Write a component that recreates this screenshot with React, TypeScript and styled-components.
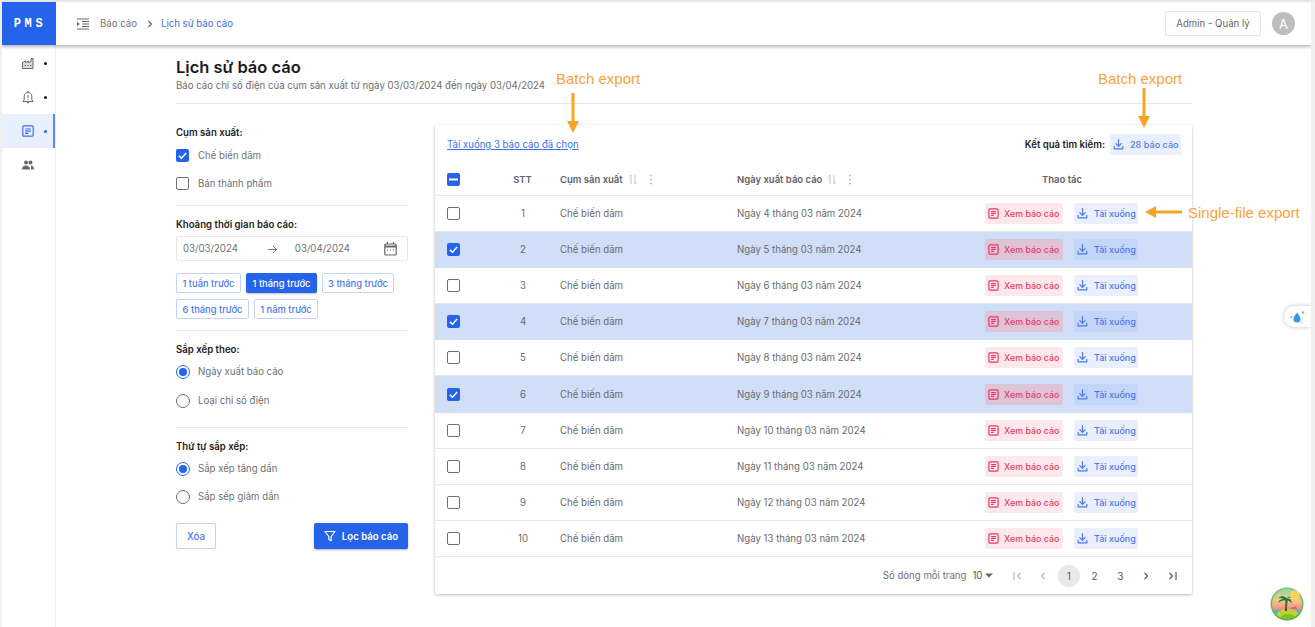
import React from "react";
import styled, { createGlobalStyle } from "styled-components";

const Global = createGlobalStyle`
  html, body { margin: 0; padding: 0; background: #fff; }
  body { font-family: Inter, "Noto Sans", sans-serif; color: #6b6b70; overflow: hidden; }
  * { box-sizing: border-box; }
`;

const Page = styled.div`
  width: 1315px; height: 627px; position: relative; overflow: hidden; background: #fff;
  border-top: 2px solid #e6e6e6; border-right: 4px solid #f0f0f0; border-left: 2px solid #f0f0f0;
`;
const TopBar = styled.header`
  height: 43px; display: flex; align-items: stretch; background: #fff;
  box-shadow: 0 2px 3px rgba(0,0,0,.28); position: relative; z-index: 2;
`;
const Logo = styled.div`
  width: 54px; background: #2563eb; color: #fff; display: flex; align-items: center; justify-content: center;
  font: 700 12px "Liberation Mono", monospace; letter-spacing: 3.6px; padding-left: 2px; margin-right: 21px;
`;
const Crumbs = styled.nav`
  display: flex; align-items: center; font-size: 9.63px; flex: 1; color: #777;
  > svg { margin-right: 11px; }
`;
const CrumbSep = styled.span`margin: 0 8px 0 10px; display: flex; color: #666;`;
const CrumbNow = styled.span`color: #3f6fe8;`;
const RoleBox = styled.div`
  width: 96px; height: 25px; margin-top: 9px; border: 1px solid #e6e6e6; border-radius: 2px;
  display: flex; align-items: center; justify-content: center; font-size: 9.63px; color: #666;
`;
const Avatar = styled.div`
  width: 23px; height: 23px; border-radius: 50%; background: #bdbdbd; color: #fff;
  margin: 10px 16px 0 11px; display: flex; align-items: center; justify-content: center; font-size: 13px;
`;
const Body = styled.div`display: flex; align-items: flex-start;`;
const Rail = styled.aside`
  width: 54px; height: 582px; border-right: 1px solid #eee; padding-top: 1px;
  display: flex; flex-direction: column;
`;
const RailItem = styled.div<{ $active?: boolean }>`
  height: 34px; display: flex; align-items: center; padding-left: 20px; gap: 10px;
  color: ${p => (p.$active ? "#2563eb" : "#666")};
  background: ${p => (p.$active ? "#e8effd" : "transparent")};
  border-right: 2px solid ${p => (p.$active ? "#5b86ee" : "transparent")};
`;
const RailDot = styled.span<{ $active?: boolean; $none?: boolean }>`
  width: 3px; height: 3px; border-radius: 50%;
  background: ${p => (p.$none ? "transparent" : p.$active ? "#2563eb" : "#111")};
`;
const Main = styled.main`width: 1016px; margin-left: 120px; padding-top: 12px;`;
const Title = styled.h1`margin: 0; font-size: 16.5px; line-height: 20px; font-weight: 600; color: #1a1a1a;`;
const Sub = styled.p`margin: 2px 0 0; font-size: 9.63px; line-height: 14px; color: #6d6d72;`;
const Rule = styled.hr`border: 0; border-top: 1px solid #e8e8e8; margin: 0;`;
const HeadRule = styled(Rule)`margin-top: 10px;`;
const Columns = styled.div`display: flex; padding-top: 21px; align-items: flex-start;`;
const Filters = styled.section`width: 232px; margin-right: 27px; padding-top: 2px;`;
const Label = styled.div`font-size: 9.63px; font-weight: 600; color: #222; line-height: 12px;`;
const FilterGroup = styled.div<{ $top?: number; $bottom?: number }>`
  padding-top: ${p => p.$top ?? 0}px;
  padding-bottom: ${p => p.$bottom ?? 0}px;
`;
const OptRow = styled.label<{ $gap?: number; $wide?: boolean }>`
  display: flex; align-items: center; height: 13px; margin-top: ${p => p.$gap ?? 9}px; gap: ${p => (p.$wide ? 9 : 8)}px;
  font-size: 9.63px; color: #6f6f74;
`;
const Box = styled.span<{ $state?: "on" | "off" | "mixed" }>`
  width: 13px; height: 13px; flex: none; border-radius: 2px; display: inline-flex; align-items: center; justify-content: center;
  background: ${p => (p.$state && p.$state !== "off" ? "#2563eb" : "#fff")};
  border: ${p => (p.$state && p.$state !== "off" ? "0" : "1.5px solid #6f6f6f")};
`;
const Radio = styled.span<{ $on?: boolean }>`
  width: 14px; height: 14px; flex: none; border-radius: 50%; display: inline-flex; align-items: center; justify-content: center;
  border: 1.5px solid ${p => (p.$on ? "#2563eb" : "#6f6f6f")};
  &::after { content: ""; width: 8px; height: 8px; border-radius: 50%; background: ${p => (p.$on ? "#2563eb" : "transparent")}; }
`;
const DateBox = styled.div`
  margin-top: 5px; height: 25px; border: 1px solid #e8e8e8; border-radius: 2px; display: flex; align-items: center;
  padding: 0 10px 0 6px; font-size: 9.63px; color: #6f6f74;
`;
const DateArrow = styled.span`display: flex; margin: 1px 18px 0 30px;`;
const DateEnd = styled.span`flex: 1;`;
const ChipWrap = styled.div`display: flex; flex-wrap: wrap; gap: 6px 5px; margin-top: 12px; width: 232px;`;
const Chip = styled.span<{ $on?: boolean; $w: number }>`
  width: ${p => p.$w}px; height: 20px; border-radius: 2px; display: inline-flex; align-items: center; justify-content: center;
  font-size: 9.4px; font-weight: 500; white-space: nowrap;
  color: ${p => (p.$on ? "#fff" : "#4d78ea")};
  background: ${p => (p.$on ? "#2563eb" : "#fff")};
  border: 1px solid ${p => (p.$on ? "#2563eb" : "#c4d4f8")};
  box-shadow: ${p => (p.$on ? "0 1px 2px rgba(0,0,0,.25)" : "none")};
`;
const Actions = styled.div`display: flex; justify-content: space-between; margin-top: 20px;`;
const ClearBtn = styled.button`
  width: 40px; height: 26px; background: #fff; border: 1px solid #c4d4f8; border-radius: 2px; font: 500 9.63px Inter, sans-serif; color: #4d78ea; padding: 0;
`;
const ApplyBtn = styled.button`
  width: 94px; height: 26px; background: #2563eb; border: 0; border-radius: 2px; color: #fff; font: 600 9.63px Inter, sans-serif;
  display: flex; align-items: center; justify-content: center; gap: 6px; box-shadow: 0 1px 2px rgba(0,0,0,.3); padding: 0;
`;
const Card = styled.section`
  width: 757px; box-shadow: 0 1px 3px rgba(0,0,0,.28); border-radius: 2px; background: #fff;
`;
const CardTop = styled.div`height: 38px; padding: 1px 11px 0 12px; display: flex; justify-content: space-between; align-items: center;`;
const SelLink = styled.a`font-size: 9.63px; color: #3f6fe8; text-decoration: underline;`;
const ResultWrap = styled.div`display: flex; align-items: center; gap: 5px; font-size: 9.63px; font-weight: 600; color: #1f1f1f;`;
const ResultBtn = styled.span`
  width: 71px; height: 21px; background: #e9effd; color: #4d78ea; border-radius: 2px; display: flex; align-items: center;
  gap: 5px; padding-left: 2px; font-size: 9.1px; font-weight: 500; white-space: nowrap;
`;
const Row = styled.div<{ $sel?: boolean; $head?: boolean }>`
  display: grid; grid-template-columns: 50px 75px 177px 217px 1fr; align-items: center;
  height: ${p => (p.$head ? 33 : 36.1)}px; padding-top: ${p => (p.$head ? 1 : 0)}px;
  background: ${p => (p.$sel ? "#d1def8" : "transparent")};
  border-bottom: 1px solid ${p => (p.$sel ? "#d1def8" : "#e8e8e8")};
  font-size: 9.63px; color: #6a6a70;
`;
const HeadCell = styled.span`font-weight: 600; font-size: 9.5px; color: #626267; display: flex; align-items: center;`;
const CheckCell = styled.span`padding-left: 12px; display: flex;`;
const SttCell = styled.span`text-align: center; padding-left: 1px;`;
const SttHead = styled(HeadCell)`justify-content: center;`;
const OpsHead = styled(HeadCell)`justify-content: center; padding-right: 22px;`;
const SortMark = styled.span`display: flex; margin-left: 5px; margin-right: 9px;`;
const Ops = styled.span`display: flex; padding-left: 31px; gap: 11px;`;
const ViewBtn = styled.span<{ $sel?: boolean }>`
  width: 78px; height: 21px; border-radius: 2px; display: flex; align-items: center; gap: 4px; padding-left: 2px; white-space: nowrap;
  background: ${p => (p.$sel ? "#dfc4d8" : "#fde8ec")}; color: #e8386a; font-size: 8.9px; font-weight: 500;
`;
const DownBtn = styled.span<{ $sel?: boolean }>`
  width: 64px; height: 21px; border-radius: 2px; display: flex; align-items: center; gap: 5px; padding-left: 2px; white-space: nowrap;
  background: ${p => (p.$sel ? "#c3d5f8" : "#e9effd")}; color: #4d78ea; font-size: 9px; font-weight: 500;
`;
const Pager = styled.div`
  height: 37px; padding-top: 1px; display: flex; align-items: center; justify-content: flex-end; padding-right: 9px; font-size: 9.63px; color: #707075;
`;
const PagerSize = styled.span`margin-left: 6px; display: flex; align-items: center; gap: 3px; margin-right: 9px; color: #555;`;
const PageItem = styled.span<{ $on?: boolean; $dim?: boolean }>`
  width: 22px; height: 22px; margin-left: 3.8px; border-radius: 50%; display: flex; align-items: center; justify-content: center;
  background: ${p => (p.$on ? "#e8e8e8" : "transparent")}; color: ${p => (p.$dim ? "#b5b5b5" : "#5a5a5a")}; font-size: 10px;
`;
const Note = styled.span<{ $x: number; $y: number }>`
  position: absolute; left: ${p => p.$x}px; top: ${p => p.$y}px;
  color: #f5a33c; font: 400 15px "Liberation Sans", Arial, sans-serif; white-space: nowrap;
`;
const Arrow = styled.svg<{ $x: number; $y: number }>`position: absolute; left: ${p => p.$x}px; top: ${p => p.$y}px;`;
const WaterTab = styled.div`
  position: absolute; right: 0; top: 304px; width: 27px; height: 21px; background: #fff; border-radius: 10px 0 0 10px;
  box-shadow: 0 0 4px rgba(0,0,0,.25); display: flex; align-items: center; justify-content: center; z-index: 3;
`;
const Orb = styled.svg`position: absolute; left: 1268px; top: 585px; z-index: 3;`;

const IconDownload = ({ c = "currentColor" }: { c?: string }) => (
  <svg width="13" height="13" viewBox="0 0 24 24" fill="none" stroke={c} strokeWidth="2.2" strokeLinecap="round" strokeLinejoin="round" style={{ flex: "none" }}>
    <path d="M12 3v12M7 10.500l5 5 5-5M4 15.500V20h16v-4.500" />
  </svg>
);
const IconReport = ({ c = "currentColor" }: { c?: string }) => (
  <svg width="13" height="13" viewBox="0 0 24 24" fill="none" stroke={c} strokeWidth="2.200" strokeLinejoin="round" style={{ flex: "none" }}>
    <rect x="3.500" y="3.500" width="17" height="17" rx="2" />
    <path d="M7.500 8.500h9M7.500 12h9M7.500 15.500h5" />
  </svg>
);
const Check = ({ state }: { state: "on" | "off" | "mixed" }) => (
  <Box $state={state}>
    {state === "on" && (
      <svg width="11" height="11" viewBox="0 0 12 12" fill="none" stroke="#fff" strokeWidth="1.6"><path d="M2 6.200 4.800 9 10 3.200" /></svg>
    )}
    {state === "mixed" && <svg width="9" height="3" viewBox="0 0 9 3"><rect width="9" height="2" y=".5" fill="#fff" /></svg>}
  </Box>
);
const SortIcon = () => (
  <SortMark>
    <svg width="10" height="11" viewBox="0 0 10 11" fill="none" stroke="#c2c2c2" strokeWidth="1"><path d="M3 10V1L1.500 2.500M7 1v9l1.500-1.500" /></svg>
    <svg width="6" height="11" viewBox="0 0 6 11" fill="#bdbdbd" style={{ marginLeft: 10 }}><circle cx="3" cy="1.500" r="1" /><circle cx="3" cy="5.500" r="1" /><circle cx="3" cy="9.500" r="1" /></svg>
  </SortMark>
);
const DownArrow = ({ x, y }: { x: number; y: number }) => (
  <Arrow $x={x} $y={y} width="12" height="40" viewBox="0 0 12 40" fill="#f5a623"><path d="M4.500 0h3v28H12l-6 12-6-12h4.500z" /></Arrow>
);

const rows = [4, 5, 6, 7, 8, 9, 10, 11, 12, 13];
const selected = new Set([2, 4, 6]);

export default function App() {
  return (
    <Page>
      <Global />
      <TopBar>
        <Logo>PMS</Logo>
        <Crumbs>
          <svg width="12" height="12" viewBox="0 0 12 12" fill="none" stroke="#666" strokeWidth="1">
            <path d="M0 1h12M5 3.500h7M5 6h7M5 8.500h7M0 11h12" />
            <path d="M0 3.700 2.600 6 0 8.300z" fill="#666" stroke="none" />
          </svg>
          <span>Báo cáo</span>
          <CrumbSep>
            <svg width="6" height="8" viewBox="0 0 6 8" fill="none" stroke="#666" strokeWidth="1.200"><path d="M1.500 1 4.500 4 1.500 7" /></svg>
          </CrumbSep>
          <CrumbNow>Lịch sử báo cáo</CrumbNow>
        </Crumbs>
        <RoleBox>Admin - Quản lý</RoleBox>
        <Avatar>A</Avatar>
      </TopBar>
      <Body>
        <Rail>
          <RailItem>
            <svg width="12" height="11" viewBox="0 0 12 11" fill="none" stroke="#666" strokeWidth="1"><path d="M.5 10.500v-6l3-1.300v1.300l3-1.300v1.300l2.500-1V.5h2v10z" fill="#ddd" /><path d="M2.500 7.500h1.500M5.300 7.500h1.500M8 7.500h1.500" /></svg>
            <RailDot />
          </RailItem>
          <RailItem>
            <svg width="12" height="13" viewBox="0 0 12 13" fill="none" stroke="#666" strokeWidth="1"><path d="M1 10.500h10L9.800 8.800V5.200C9.800 3 8.200 1.500 6 1.500S2.200 3 2.200 5.200v3.600z" /><path d="M6 4v3M6 8v1M4.800 11.800h2.400M6 0v1.500" /></svg>
            <RailDot />
          </RailItem>
          <RailItem $active>
            <svg width="12" height="12" viewBox="0 0 12 12" fill="none" stroke="#3f6fe8" strokeWidth="1.200"><rect x=".8" y=".8" width="10.400" height="10.400" rx="1.200" /><path d="M3 4h6M3 6.200h6M3 8.400h3.500" /></svg>
            <RailDot $active />
          </RailItem>
          <RailItem>
            <svg width="12" height="10" viewBox="0 0 12 10" fill="#666"><circle cx="4" cy="2.500" r="2" /><circle cx="8.500" cy="2.500" r="2" /><path d="M0 9.500c0-3 2-4 4-4s4 1 4 4zM9 5.500c1.500 0 3 1 3 4H9z" /></svg>
            <RailDot $none />
          </RailItem>
        </Rail>
        <Main>
          <Title>Lịch sử báo cáo</Title>
          <Sub>Báo cáo chỉ số điện của cụm sản xuất từ ngày 03/03/2024 đến ngày 03/04/2024</Sub>
          <HeadRule />
          <Columns>
            <Filters>
              <FilterGroup $bottom={15}>
                <Label>Cụm sản xuất:</Label>
                <OptRow $gap={10} $wide><Check state="on" />Chế biến dăm</OptRow>
                <OptRow $gap={15} $wide><Check state="off" />Bán thành phẩm</OptRow>
              </FilterGroup>
              <Rule />
              <FilterGroup $top={13} $bottom={11}>
                <Label>Khoảng thời gian báo cáo:</Label>
                <DateBox>
                  <span>03/03/2024</span>
                  <DateArrow>
                    <svg width="9" height="9" viewBox="0 0 9 9" fill="none" stroke="#777" strokeWidth="1"><path d="M0 4.500h8.500M5 1l3.500 3.500L5 8" /></svg>
                  </DateArrow>
                  <DateEnd>03/04/2024</DateEnd>
                  <svg width="13" height="14" viewBox="0 0 13 14" fill="none" stroke="#666" strokeWidth="1.200"><rect x=".8" y="2" width="11.400" height="11" rx="1" /><path d="M.8 4.500h11.400" strokeWidth="2" /><path d="M3.500 0v2M9.500 0v2" /><path d="M3 8h1M6 8h1M9 8h1" /></svg>
                </DateBox>
                <ChipWrap>
                  <Chip $w={65}>1 tuần trước</Chip>
                  <Chip $w={71} $on>1 tháng trước</Chip>
                  <Chip $w={72}>3 tháng trước</Chip>
                  <Chip $w={73}>6 tháng trước</Chip>
                  <Chip $w={64}>1 năm trước</Chip>
                </ChipWrap>
              </FilterGroup>
              <Rule />
              <FilterGroup $top={13} $bottom={20}>
                <Label>Sắp xếp theo:</Label>
                <OptRow $gap={9}><Radio $on />Ngày xuất báo cáo</OptRow>
                <OptRow $gap={16}><Radio />Loại chỉ số điện</OptRow>
              </FilterGroup>
              <Rule />
              <FilterGroup $top={13}>
                <Label>Thứ tự sắp xếp:</Label>
                <OptRow $gap={9}><Radio $on />Sắp xếp tăng dần</OptRow>
                <OptRow $gap={15}><Radio />Sắp sếp giảm dần</OptRow>
              </FilterGroup>
              <Actions>
                <ClearBtn>Xóa</ClearBtn>
                <ApplyBtn>
                  <svg width="12" height="12" viewBox="0 0 12 12" fill="none" stroke="#fff" strokeWidth="1.200" strokeLinejoin="round"><path d="M1 1.500h10L7.200 6.500v4.200l-2.400-1.200v-3z" /></svg>
                  Lọc báo cáo
                </ApplyBtn>
              </Actions>
            </Filters>
            <Card>
              <CardTop>
                <SelLink>Tải xuống 3 báo cáo đã chọn</SelLink>
                <ResultWrap>
                  Kết quả tìm kiếm:
                  <ResultBtn><IconDownload />28 báo cáo</ResultBtn>
                </ResultWrap>
              </CardTop>
              <Row $head>
                <CheckCell><Check state="mixed" /></CheckCell>
                <SttHead>STT</SttHead>
                <HeadCell>Cụm sản xuất<SortIcon /></HeadCell>
                <HeadCell>Ngày xuất báo cáo<SortIcon /></HeadCell>
                <OpsHead>Thao tác</OpsHead>
              </Row>
              {rows.map((d, i) => {
                const n = i + 1;
                const sel = selected.has(n);
                return (
                  <Row key={n} $sel={sel}>
                    <CheckCell><Check state={sel ? "on" : "off"} /></CheckCell>
                    <SttCell>{n}</SttCell>
                    <span>Chế biến dăm</span>
                    <span>Ngày {d} tháng 03 năm 2024</span>
                    <Ops>
                      <ViewBtn $sel={sel}><IconReport />Xem báo cáo</ViewBtn>
                      <DownBtn $sel={sel}><IconDownload />Tải xuống</DownBtn>
                    </Ops>
                  </Row>
                );
              })}
              <Pager>
                Số dòng mỗi trang
                <PagerSize>10 <svg width="8" height="5" viewBox="0 0 8 5" fill="#666"><path d="M0 .5h8L4 4.500z" /></svg></PagerSize>
                <PageItem $dim><svg width="9" height="8" viewBox="0 0 9 8" fill="none" stroke="currentColor" strokeWidth="1.200"><path d="M1 0v8M7.500 1 4.500 4l3 3" /></svg></PageItem>
                <PageItem $dim><svg width="6" height="8" viewBox="0 0 6 8" fill="none" stroke="currentColor" strokeWidth="1.200"><path d="M4.500 1 1.500 4l3 3" /></svg></PageItem>
                <PageItem $on>1</PageItem>
                <PageItem>2</PageItem>
                <PageItem>3</PageItem>
                <PageItem><svg width="6" height="8" viewBox="0 0 6 8" fill="none" stroke="currentColor" strokeWidth="1.200"><path d="M1.500 1l3 3-3 3" /></svg></PageItem>
                <PageItem><svg width="9" height="8" viewBox="0 0 9 8" fill="none" stroke="currentColor" strokeWidth="1.200"><path d="M8 0v8M1.500 1l3 3-3 3" /></svg></PageItem>
              </Pager>
            </Card>
          </Columns>
        </Main>
      </Body>

      <Note $x={554} $y={68}>Batch export</Note>
      <Note $x={1096} $y={68}>Batch export</Note>
      <Note $x={1186} $y={202}>Single-file export</Note>
      <DownArrow x={565} y={91} />
      <DownArrow x={1136} y={86} />
      <Arrow $x={1143} $y={204} width="37" height="12" viewBox="0 0 37 12" fill="#f5a623"><path d="M37 4.500v3H11V12L0 6l11-6v4.500z" /></Arrow>
      <WaterTab>
        <svg width="16" height="14" viewBox="0 0 16 14" fill="#2f9be8"><path d="M7 2.500C8.500 5 10.500 6.500 10.500 9a3.500 3.500 0 0 1-7 0C3.500 6.500 5.500 5 7 2.500z" /><circle cx="1.500" cy="7" r="1" fill="#6ec0f2" /><circle cx="13" cy="2.500" r="1.300" fill="#6ec0f2" /><circle cx="11.500" cy="12.500" r=".9" fill="#8fd0f5" /></svg>
      </WaterTab>
      <Orb width="34" height="34" viewBox="0 0 34 34">
        <defs>
          <linearGradient id="sky" x1="0" y1="0" x2="0" y2="1">
            <stop offset="0" stopColor="#8fd8a8" /><stop offset=".4" stopColor="#f8c488" /><stop offset=".68" stopColor="#f58a88" /><stop offset=".72" stopColor="#4fb4cc" /><stop offset="1" stopColor="#4fb4cc" />
          </linearGradient>
          <linearGradient id="rim" x1="0" y1="0" x2="0" y2="1">
            <stop offset="0" stopColor="#7cc96a" /><stop offset="1" stopColor="#5aa83a" />
          </linearGradient>
          <clipPath id="disc"><circle cx="17" cy="17" r="15" /></clipPath>
        </defs>
        <circle cx="17" cy="17" r="16.500" fill="url(#rim)" />
        <circle cx="17" cy="17" r="15" fill="url(#sky)" />
        <circle cx="25" cy="8" r="4.500" fill="#f9d45c" />
        <g clipPath="url(#disc)">
          <path d="M4 34c0-8 6-12 14-12s13 5 13 12z" fill="#b4d62e" />
          <path d="M8 34c2-5 6-7 10-7s8 2 10 7z" fill="#7fbf2a" />
        </g>
        <path d="M15 24c0-5 .5-8 1.500-12h1.500c-1 4-1.500 7-1 12z" fill="#5a3d22" />
        <path d="M17 12c-2-3.500-6-3.500-8.500-1 2.200-.2 3.500 0 5 1-2.500 0-5 1.200-5.500 4 2.500-2.200 5-2.600 7.500-2.500-.5 2 0 4 1.500 5.500.5-2 .5-3.800 0-5.500 2.200.3 3.500 1.300 4.500 3 .5-3.500-1.500-5.500-4.500-4.500 1-1.300 2.500-1.800 4-1.500-1.500-1.500-3.500-1-4 1.500z" fill="#1f7a3a" />
        <path d="M20 21l6-1.500 1 2.500h-6z" fill="#e8568a" />
      </Orb>
    </Page>
  );
}
